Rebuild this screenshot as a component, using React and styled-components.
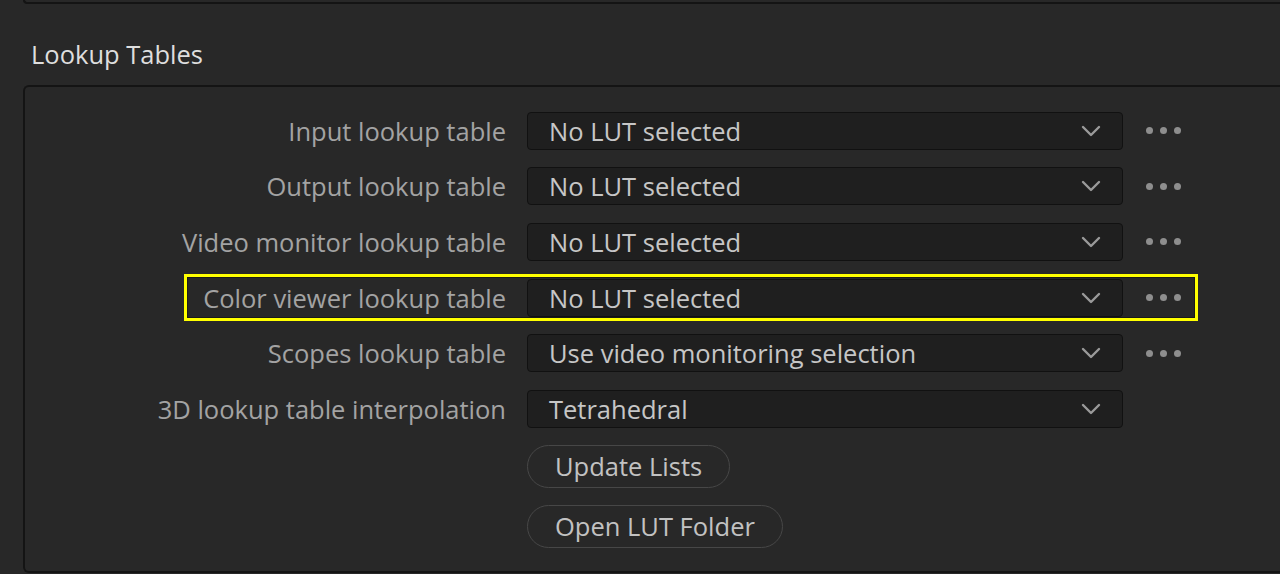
import styled, { createGlobalStyle } from "styled-components"

const Global = createGlobalStyle`
html, body {
  margin: 0;
  background: #282828;
  overflow: hidden;
}
body {
  font-family: "Open Sans", "Noto Sans", sans-serif;
}
`

const rows = [
    { label: "Input lookup table", value: "No LUT selected", more: true },
    { label: "Output lookup table", value: "No LUT selected", more: true },
    { label: "Video monitor lookup table", value: "No LUT selected", more: true },
    { label: "Color viewer lookup table", value: "No LUT selected", more: true, marked: true },
    { label: "Scopes lookup table", value: "Use video monitoring selection", more: true },
    { label: "3D lookup table interpolation", value: "Tetrahedral", more: false },
]

const Chevron = () => (
    <svg width="20" height="12" viewBox="0 0 20 12">
        <polyline points="2,2 10,10 18,2" fill="none" stroke="#9a9a9a" strokeWidth="2.4" strokeLinecap="round" strokeLinejoin="round"/>
    </svg>
)

const Settings = () => {
    return (
<Page>
    <Global/>
    <PrevPanel/>
    <Heading>Lookup Tables</Heading>
    <Panel>
        {rows.map((r) => (
            <Row key={r.label}>
                {r.marked && <Marker/>}
                <Label>{r.label}</Label>
                <Select>
                    <span>{r.value}</span>
                    <Chevron/>
                </Select>
                <More $hidden={!r.more}>
                    <Dot/><Dot/><Dot/>
                </More>
            </Row>
        ))}
        <Buttons>
            <Pill>Update Lists</Pill>
            <Pill>Open LUT Folder</Pill>
        </Buttons>
    </Panel>
</Page>
    )
}

const Page = styled.div`
width: 1280px;
height: 574px;
overflow: hidden;
`
const PrevPanel = styled.div`
margin-left: 23px;
height: 2px;
border: 2px solid #141414;
border-top: none;
border-right: none;
border-bottom-left-radius: 6px;
`
const Heading = styled.h2`
margin: 0;
padding: 31px 0 0 31px;
height: 50px;
font-size: 25.5px;
line-height: 38px;
font-weight: 400;
color: #dedede;
`
const Panel = styled.div`
margin-left: 23px;
width: 1300px;
height: 488px;
box-sizing: border-box;
border: 2px solid #141414;
border-right: none;
border-radius: 6px 0 0 6px;
padding-top: 16px;
`
const Row = styled.div`
position: relative;
display: flex;
align-items: center;
height: 55.6px;
`
const Marker = styled.div`
position: absolute;
left: 159px;
top: 4px;
width: 1014px;
height: 47px;
box-sizing: border-box;
border: 3px solid #ffff00;
box-shadow: inset 0 0 0 1px #1a1a1a;
pointer-events: none;
`
const Label = styled.div`
width: 481px;
text-align: right;
font-size: 25.5px;
color: #a3a3a3;
margin-right: 21px;
`
const Select = styled.div`
width: 596px;
height: 38px;
box-sizing: border-box;
display: flex;
align-items: center;
justify-content: space-between;
padding: 0 21px 0 21px;
background: #1f1f1f;
border: 1px solid #111;
border-radius: 4px;
font-size: 25.5px;
color: #c6c6c6;
`
const More = styled.div`
display: flex;
gap: 7px;
margin-left: 23px;
visibility: ${p => p.$hidden ? "hidden" : "visible"};
`
const Dot = styled.span`
width: 7px;
height: 7px;
border-radius: 50%;
background: #8e8e8e;
`
const Buttons = styled.div`
display: flex;
flex-direction: column;
align-items: flex-start;
gap: 17px;
padding: 8px 0 0 502px;
`
const Pill = styled.button`
height: 43px;
padding: 0 27px;
background: transparent;
border: 1px solid #474747;
border-radius: 22px;
font-family: "Open Sans", "Noto Sans", sans-serif;
font-size: 25.5px;
color: #c2c2c2;
`
export default Settings
